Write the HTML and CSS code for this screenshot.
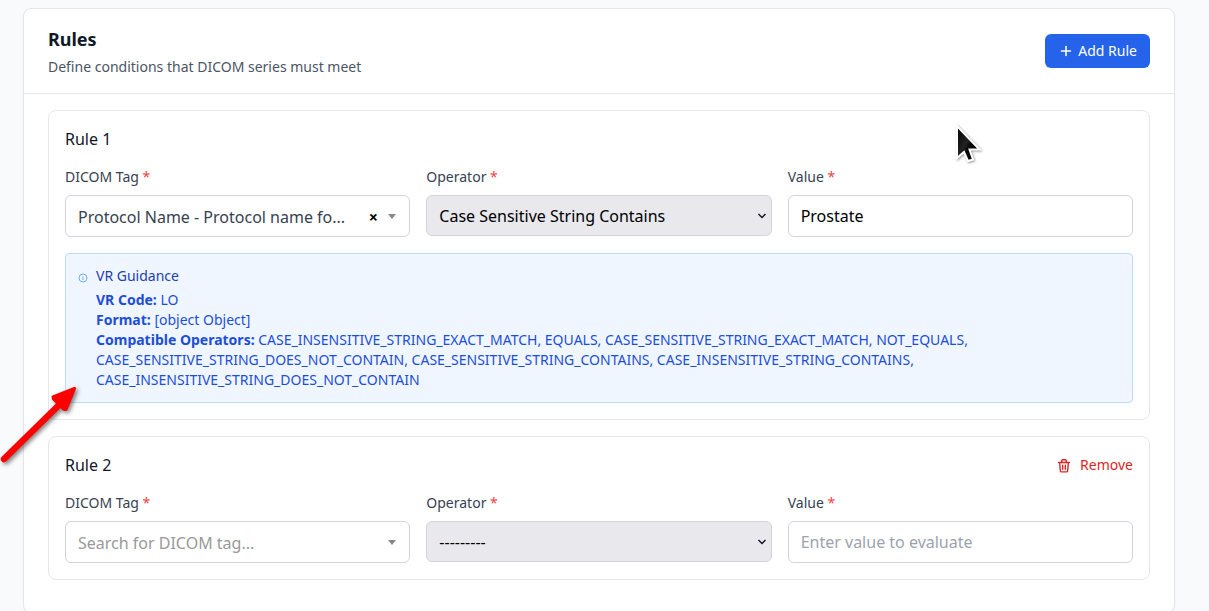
FILE: index.html
```html
<!DOCTYPE html>
<html lang="en">
<head>
<meta charset="utf-8">
<meta name="viewport" content="width=device-width, initial-scale=1">
<title>Rules</title>
<link rel="stylesheet" href="styles.css">
</head>
<body>
<main class="card">
  <header class="card-header">
    <div class="heading">
      <h2 class="title">Rules</h2>
      <p class="subtitle">Define conditions that DICOM series must meet</p>
    </div>
    <button type="button" class="add-button">
      <svg class="icon" viewBox="0 0 16 16" aria-hidden="true"><path d="M8 3.500v9M3.500 8h9" fill="none" stroke="currentColor" stroke-width="1.6" stroke-linecap="round"/></svg>
      Add Rule
    </button>
  </header>
  <div class="rules">
    <section class="rule">
      <div class="rule-header"><h3 class="rule-title">Rule 1</h3></div>
      <div class="fields">
        <div class="field">
          <label class="label" for="tag-1">DICOM Tag <span class="required">*</span></label>
          <div class="control">
            <select class="input tag-select" id="tag-1"><option>Protocol Name - Protocol name fo...</option></select>
            <button type="button" class="clear-button" aria-label="Clear">×</button>
            <span class="triangle"></span>
          </div>
        </div>
        <div class="field">
          <label class="label" for="operator-1">Operator <span class="required">*</span></label>
          <div class="control">
            <select class="input operator-select" id="operator-1"><option>Case Sensitive String Contains</option></select>
            <svg class="chevron" viewBox="0 0 10 10" aria-hidden="true"><path d="M1.500 3L5 6.500 8.500 3" fill="none" stroke="currentColor" stroke-width="1.5"/></svg>
          </div>
        </div>
        <div class="field">
          <label class="label" for="value-1">Value <span class="required">*</span></label>
          <input class="input" id="value-1" type="text" value="Prostate">
        </div>
      </div>
      <div class="guidance">
        <svg class="info-icon" viewBox="0 0 10 10" aria-hidden="true"><circle cx="5" cy="5" r="4" fill="none" stroke="currentColor" stroke-width=".9"/><path d="M4.400 4.500h.8L4.700 6.500h.8M5 3.100v.5" fill="none" stroke="currentColor" stroke-width=".8"/></svg>
        <div class="guidance-body">
          <h4 class="guidance-title">VR Guidance</h4>
          <p class="guidance-line"><strong>VR Code:</strong> LO</p>
          <p class="guidance-line"><strong>Format:</strong> [object Object]</p>
          <p class="guidance-line"><strong>Compatible Operators:</strong> CASE_INSENSITIVE_STRING_EXACT_MATCH, EQUALS, CASE_SENSITIVE_STRING_EXACT_MATCH, NOT_EQUALS, CASE_SENSITIVE_STRING_DOES_NOT_CONTAIN, CASE_SENSITIVE_STRING_CONTAINS, CASE_INSENSITIVE_STRING_CONTAINS, CASE_INSENSITIVE_STRING_DOES_NOT_CONTAIN</p>
        </div>
      </div>
    </section>
    <section class="rule">
      <div class="rule-header">
        <h3 class="rule-title">Rule 2</h3>
        <button type="button" class="remove-button">
          <svg class="icon" viewBox="0 0 16 16" aria-hidden="true"><g fill="none" stroke="currentColor" stroke-width="1.4" stroke-linecap="round" stroke-linejoin="round"><path d="M2.500 5.500h11M5.700 5.300V3.600q0-.9.9-.9h2.800q.9 0 .9.900v1.700M3.700 5.700l.6 8q.1 1.200 1.200 1.200h5q1.100 0 1.200-1.200l.6-8"/><path d="M6.700 8.300v4M9.300 8.300v4"/></g></svg>
          Remove
        </button>
      </div>
      <div class="fields">
        <div class="field">
          <label class="label" for="tag-2">DICOM Tag <span class="required">*</span></label>
          <div class="control">
            <select class="input tag-select tag-empty" id="tag-2"><option>Search for DICOM tag...</option></select>
            <span class="triangle"></span>
          </div>
        </div>
        <div class="field">
          <label class="label" for="operator-2">Operator <span class="required">*</span></label>
          <div class="control">
            <select class="input operator-select" id="operator-2"><option>---------</option></select>
            <svg class="chevron" viewBox="0 0 10 10" aria-hidden="true"><path d="M1.500 3L5 6.500 8.500 3" fill="none" stroke="currentColor" stroke-width="1.5"/></svg>
          </div>
        </div>
        <div class="field">
          <label class="label" for="value-2">Value <span class="required">*</span></label>
          <input class="input" id="value-2" type="text" placeholder="Enter value to evaluate">
        </div>
      </div>
    </section>
  </div>
</main>
<svg class="annotation-arrow" viewBox="0 0 84 84" aria-hidden="true"><path d="M4 79L60 24" stroke="#f00" stroke-width="6.500" stroke-linecap="round"/><path d="M74.500 8.500L53 17 53.500 19 64 29.500 66 29.500Z" fill="#f00" stroke="#f00" stroke-width="3" stroke-linejoin="round"/></svg>
<svg class="pointer" viewBox="0 0 32 42" aria-hidden="true"><defs><linearGradient id="pointer-fill" x1="0" y1="0" x2="1" y2="1"><stop offset="0" stop-color="#000"/><stop offset=".45" stop-color="#222"/><stop offset=".6" stop-color="#000"/></linearGradient></defs><path d="M3 3V35L10 29 14 38 19 36.500 15.500 26.500H25.500Z" fill="url(#pointer-fill)" stroke="#fff" stroke-width="2"/></svg>
</body>
</html>
```
FILE: styles.css
```css
* {
  box-sizing: border-box;
}

html {
  background: #f9fafb;
  overflow-x: hidden;
}

body {
  position: relative;
  margin: 0;
  padding: 8px 34px 0 23px;
  font-family: "Noto Sans", sans-serif;
  font-size: 14px;
  line-height: 20px;
  color: #111827;
}

h2, h3, h4, p {
  margin: 0;
}

button, input, select {
  font: inherit;
  margin: 0;
}

.card {
  background: #fff;
  border: 1px solid #e5e7eb;
  border-radius: 8px;
  box-shadow: 0 1px 2px rgba(0, 0, 0, 0.05);
}

.card-header {
  display: flex;
  align-items: center;
  justify-content: space-between;
  padding: 16px 24px;
  border-bottom: 1px solid #e5e7eb;
}

.heading {
  display: flex;
  flex-direction: column;
  gap: 4px;
}

.title {
  font-size: 18px;
  font-weight: 700;
  line-height: 28px;
}

.subtitle {
  color: #4b5563;
}

.icon {
  width: 16px;
  height: 16px;
}

.add-button {
  display: flex;
  align-items: center;
  gap: 4px;
  padding: 7px 13px;
  border: 0;
  border-radius: 6px;
  background: #2563eb;
  color: #fff;
}

.rules {
  display: flex;
  flex-direction: column;
  gap: 16px;
  padding: 16px 24px 32px;
}

.rule {
  padding: 16px;
  border: 1px solid #e5e7eb;
  border-radius: 8px;
}

.rule-header {
  display: flex;
  align-items: center;
  justify-content: space-between;
  margin-bottom: 16px;
}

.rule-title {
  font-size: 16px;
  font-weight: 400;
  line-height: 24px;
}

.remove-button {
  display: flex;
  align-items: center;
  gap: 8px;
  padding: 0;
  border: 0;
  background: none;
  color: #dc2626;
}

.fields {
  display: grid;
  grid-template-columns: repeat(3, minmax(0, 1fr));
  gap: 16px;
}

.field {
  display: flex;
  flex-direction: column;
  gap: 8px;
}

.label {
  color: #374151;
}

.required {
  color: #ef4444;
}

.control {
  position: relative;
}

.input {
  appearance: none;
  display: block;
  width: 100%;
  height: 42px;
  padding: 8px 12px;
  border: 1px solid #d1d5db;
  border-radius: 6px;
  background: #fff;
  font-size: 16px;
  line-height: 24px;
  color: #000;
}

.input::placeholder {
  color: #9ca3af;
}

.tag-select {
  padding: 9px 60px 7px 12px;
  color: #374151;
}

.tag-empty {
  color: #999;
}

.operator-select {
  height: 41px;
  background: #e9e9ed;
}

.clear-button {
  position: absolute;
  top: 12px;
  right: 30px;
  width: 14px;
  padding: 0;
  border: 0;
  background: none;
  font-size: 16px;
  font-weight: 700;
  color: #000;
}

.triangle {
  position: absolute;
  top: 19px;
  right: 14px;
  border: 4px solid transparent;
  border-top: 5px solid #888;
  border-bottom: 0;
  pointer-events: none;
}

.chevron {
  position: absolute;
  top: 16px;
  right: 5px;
  width: 10px;
  height: 10px;
  pointer-events: none;
}

.guidance {
  display: flex;
  gap: 8px;
  margin-top: 16px;
  padding: 12px;
  border: 1px solid #bfdbfe;
  border-radius: 4px;
  background: #eff6ff;
  color: #1d4ed8;
}

.info-icon {
  flex: none;
  width: 10px;
  height: 10px;
  margin-top: 7px;
  color: #60a5fa;
}

.guidance-title {
  margin-bottom: 4px;
  font-size: 14px;
  font-weight: 400;
  color: #1e40af;
}

.annotation-arrow {
  position: absolute;
  top: 380px;
  left: 0;
  width: 84px;
  height: 84px;
  filter: drop-shadow(2px 2px 2px rgba(0, 0, 0, 0.5));
}

.pointer {
  position: absolute;
  top: 123px;
  left: 954px;
  width: 32px;
  height: 42px;
  filter: drop-shadow(1px 1px 1px rgba(0, 0, 0, 0.4));
}
```
